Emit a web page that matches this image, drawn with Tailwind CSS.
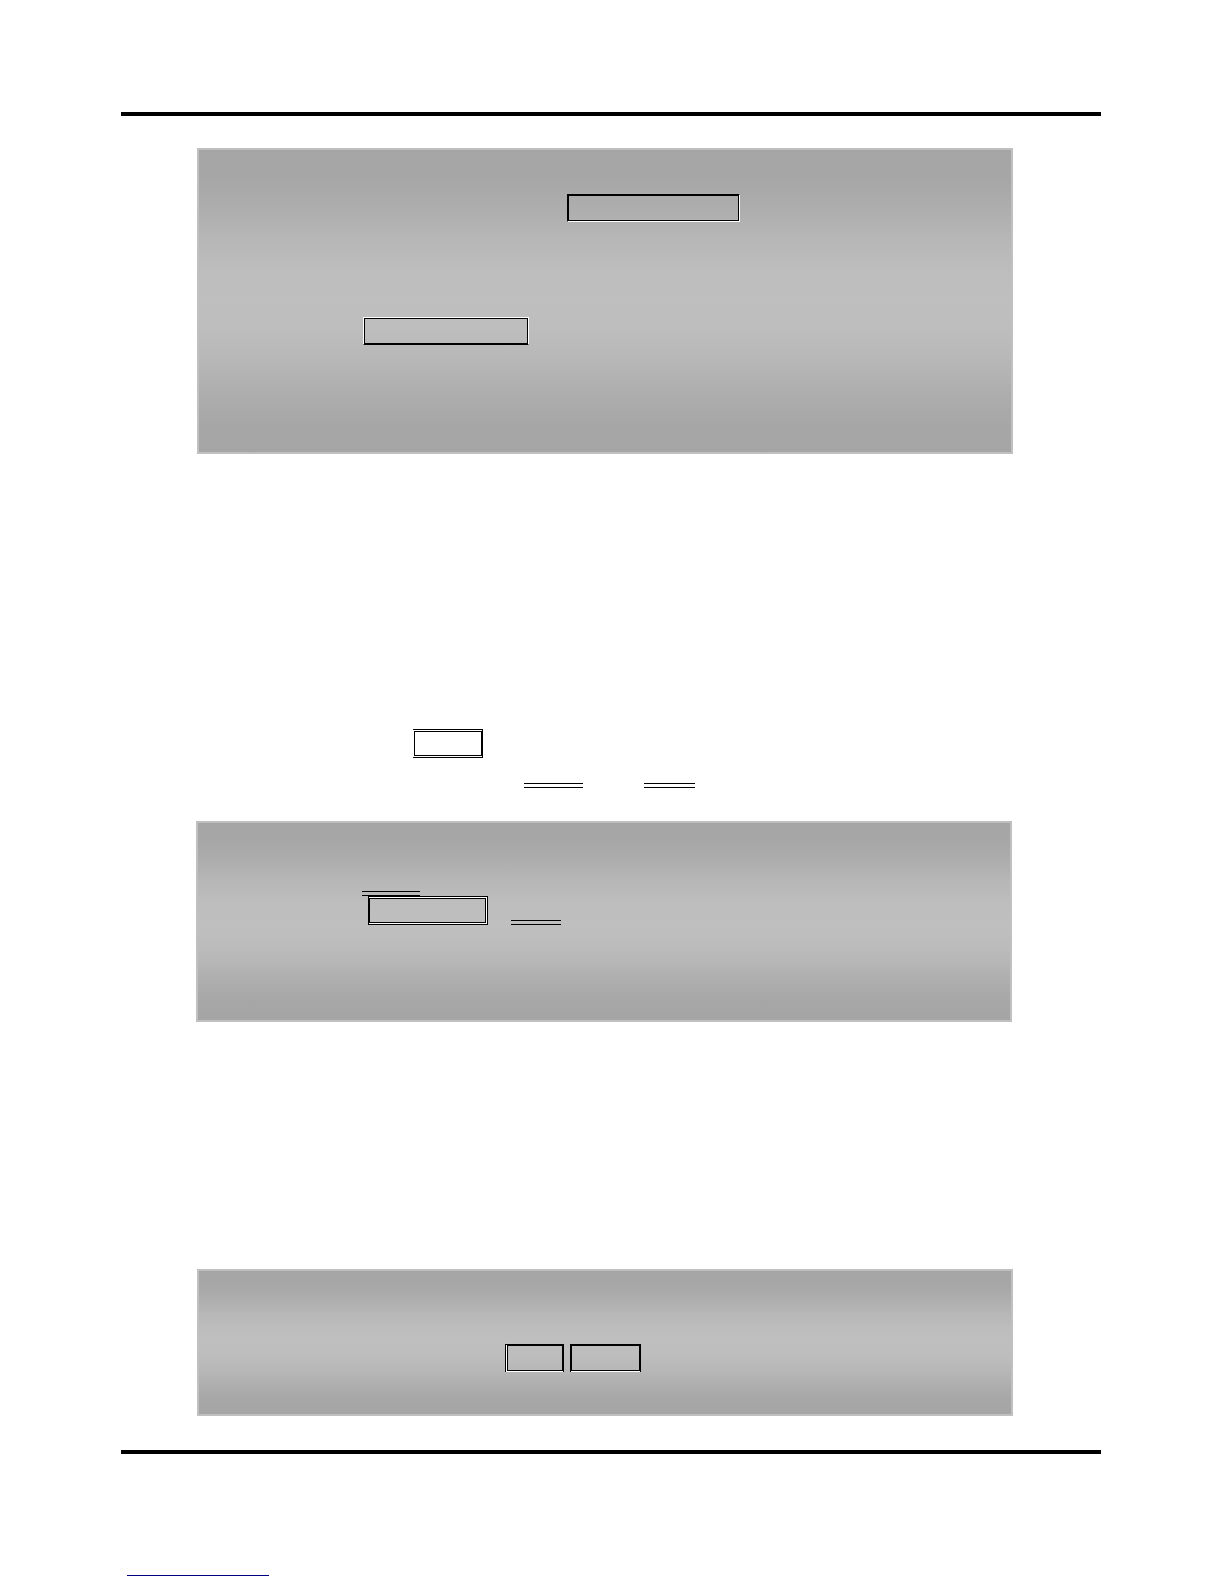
<!DOCTYPE html>
<html lang="en">
<head>
  <meta charset="UTF-8" />
  <meta name="viewport" content="width=device-width, initial-scale=1.0" />
  <title>Page</title>
  <script src="https://cdn.jsdelivr.net/npm/@tailwindcss/browser@4"></script>
</head>
<body class="bg-white font-['Liberation_Sans',sans-serif]">

  <div class="pt-28 pb-2 pl-[121px] pr-[123px]">

    <main class="border-y-4 border-black pt-8 pb-[34px]">

      <!-- First panel -->
      <section class="ml-[76px] mr-[88px] border-2 border-[#c0c0c0] bg-[linear-gradient(#a5a5a5,#a7a7a7_10%,#aeaeae_20%,#b7b7b7_30%,#bdbdbd_40%,#bfbfbf_50%,#bdbdbd_60%,#b7b7b7_70%,#aeaeae_80%,#a7a7a7_90%,#a5a5a5)] pt-11 pb-[107px]">
        <div class="flex pl-[368px]">
          <div class="w-[173px] border border-t-black border-l-black border-r-white border-b-white">
            <div class="h-[26px] border border-black"></div>
          </div>
        </div>
        <div class="mt-[95px] flex pl-[164px]">
          <div class="w-[166px] border border-t-white border-x-white border-b-black">
            <div class="h-[26px] border border-black"></div>
          </div>
        </div>
      </section>

      <!-- Key box and double underlines -->
      <section class="mt-[275px]">
        <div class="flex pl-[292px]">
          <div class="w-[70px] border-y border-r border-black py-px pl-px">
            <div class="h-[25px] border border-black"></div>
          </div>
        </div>
        <div class="mt-[25px] flex gap-[61px] pl-[403px]">
          <div class="h-[5px] w-[59px] border-y border-black"></div>
          <div class="h-[5px] w-[51px] border-y border-black"></div>
        </div>
      </section>

      <!-- Second panel -->
      <section class="mt-[33px] ml-[75px] mr-[89px] border-2 border-[#c0c0c0] bg-[linear-gradient(#a5a5a5,#a7a7a7_10%,#aeaeae_20%,#b7b7b7_30%,#bdbdbd_40%,#bfbfbf_50%,#bdbdbd_60%,#b7b7b7_70%,#aeaeae_80%,#a7a7a7_90%,#a5a5a5)] pt-[68px] pb-[95px]">
        <div class="flex pl-[164px]">
          <div class="h-[5px] w-[58px] border-y border-black"></div>
        </div>
        <div class="flex items-end gap-[23px] pl-[170px]">
          <div class="w-[120px] border border-black">
            <div class="border-y border-r border-white">
              <div class="h-[25px] border border-black"></div>
            </div>
          </div>
          <div class="h-[5px] w-[50px] border-y border-black"></div>
        </div>
      </section>

      <!-- Third panel -->
      <section class="mt-[247px] ml-[76px] mr-[88px] border-2 border-[#c0c0c0] bg-[linear-gradient(#a5a5a5,#a7a7a7_10%,#aeaeae_20%,#b7b7b7_30%,#bdbdbd_40%,#bfbfbf_50%,#bdbdbd_60%,#b7b7b7_70%,#aeaeae_80%,#a7a7a7_90%,#a5a5a5)] pt-[73px] pb-[42px]">
        <div class="flex gap-[6px] pl-[306px]">
          <div class="w-[59px] border-x border-t border-black">
            <div class="border-b border-l border-white">
              <div class="h-[26px] border border-black"></div>
            </div>
          </div>
          <div class="w-[71px] border-x border-t border-black">
            <div class="border-b border-white">
              <div class="h-[26px] border border-black"></div>
            </div>
          </div>
        </div>
      </section>

    </main>

    <footer class="flex pt-[121px] pl-[6px]">
      <a href="#" aria-label="Website" class="w-[142px] border-b border-[#000080]"></a>
    </footer>

  </div>

</body>
</html>
